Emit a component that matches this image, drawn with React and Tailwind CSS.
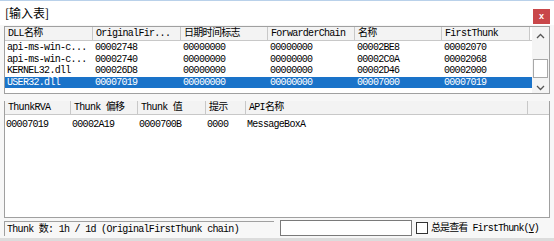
import React from 'react';

const upperCols = [
  { label: 'DLL名称', w: 'w-[88px]' },
  { label: 'OriginalFir...', w: 'w-[88px]' },
  { label: '日期时间标志', w: 'w-[87px]' },
  { label: 'ForwarderChain', w: 'w-[87px]' },
  { label: '名称', w: 'w-[87px]' },
  { label: 'FirstThunk', w: 'w-[88px]' },
];

const upperRows = [
  ['api-ms-win-c...', '00002748', '00000000', '00000000', '00002BE8', '00002070'],
  ['api-ms-win-c...', '00002740', '00000000', '00000000', '00002C0A', '00002068'],
  ['KERNEL32.dll', '000026D8', '00000000', '00000000', '00002D46', '00002000'],
  ['USER32.dll', '00007019', '00000000', '00000000', '00007000', '00007019'],
];

const lowerCols = [
  { label: 'ThunkRVA', w: 'w-[66px]' },
  { label: 'Thunk 偏移', w: 'w-[67px]' },
  { label: 'Thunk 值', w: 'w-[68px]' },
  { label: '提示', w: 'w-[40px]' },
  { label: 'API名称', w: 'w-[282px]' },
];

const lowerRows = [['00007019', '00002A19', '0000700B', '0000', 'MessageBoxA']];

const mono = "font-['Liberation_Mono','Noto_Sans_CJK_SC',monospace] text-[10px] tracking-[-0.7px]";

const HeaderCell = ({ label, w }) => (
  <div className={`${w} shrink-0 h-[13px] leading-[13px] pl-[3px] bg-[#f3f3f3] border-r border-[#c8c8c8] truncate`}>
    {label}
  </div>
);

const Arrow = ({ up }) => (
  <svg width="9" height="6" viewBox="0 0 9 6">
    <path d={up ? 'M1 5 L4.5 1.5 L8 5' : 'M1 1 L4.5 4.5 L8 1'} fill="none" stroke="#555" strokeWidth="1.3" />
  </svg>
);

export default function App() {
  return (
    <div className="w-[554px] h-[241px] bg-[#f7f7f7] border-t border-[#b9d1ea] flex flex-col relative overflow-hidden">
      {/* title */}
      <div className="h-[24px] flex items-center justify-between pl-[5px] pr-[4px] bg-white">
        <span className="font-['Noto_Sans_CJK_SC',sans-serif] text-[12px] text-black leading-none">[输入表]</span>
        <div className="w-[17px] h-[15px] bg-[#c9474a] flex items-center justify-center mt-[7px]">
          <span className="text-white text-[9px] font-bold font-['Liberation_Sans',sans-serif] leading-none">x</span>
        </div>
      </div>

      {/* upper list */}
      <div className={`mx-[4px] mt-[1px] h-[68px] border border-[#a0a0a0] bg-white flex ${mono}`}>
        <div className="flex-1 flex flex-col">
          <div className="flex border-b border-[#c8c8c8]">
            {upperCols.map((c) => (
              <HeaderCell key={c.label} {...c} />
            ))}
          </div>
          <div className="pt-[1px]">
            {upperRows.map((r, i) => (
              <div
                key={i}
                className={`flex h-[11.5px] leading-[11.5px] ${i === 3 ? 'bg-[#1a73c9] text-white' : 'text-black'}`}
              >
                {r.map((v, j) => (
                  <div key={j} className={`${upperCols[j].w} shrink-0 pl-[2px] truncate`}>
                    {v}
                  </div>
                ))}
              </div>
            ))}
          </div>
        </div>
        <div className="w-[17px] bg-[#f4f4f4] flex flex-col items-center">
          <div className="h-[17px] flex items-center justify-center">
            <Arrow up />
          </div>
          <div className="flex-1 w-full flex flex-col justify-end pb-[4px] items-center">
            <div className="w-[15px] h-[19px] bg-white border border-[#a8a8a8]" />
          </div>
          <div className="h-[11px] flex items-center justify-center">
            <Arrow />
          </div>
        </div>
      </div>

      {/* lower list */}
      <div className={`mx-[4px] mt-[7px] h-[117px] border border-[#a0a0a0] bg-white flex flex-col ${mono}`}>
        <div className="flex border-b border-[#c8c8c8] mt-[-1px]">
          {lowerCols.map((c) => (
            <HeaderCell key={c.label} {...c} />
          ))}
          <div className="flex-1 h-[13px] bg-[#f3f3f3]" />
        </div>
        <div className="pt-[4px]">
          {lowerRows.map((r, i) => (
            <div key={i} className="flex h-[12px] leading-[12px] text-black">
              {r.map((v, j) => (
                <div key={j} className={`${lowerCols[j].w} shrink-0 pl-[1px] truncate`}>
                  {v}
                </div>
              ))}
            </div>
          ))}
        </div>
      </div>

      {/* status bar */}
      <div className={`flex items-center h-[18px] mt-[1px] pl-[4px] pr-[4px] gap-[4px] ${mono}`}>
        <div className="w-[270px] h-[15px] leading-[15px] border-t border-l border-[#a0a0a0] pl-[2px] text-black bg-[#f7f7f7]">
          Thunk 数: 1h / 1d (OriginalFirstThunk chain)
        </div>
        <div className="w-[132px] h-[16px] border border-[#7a7a7a] bg-white ml-[2px]" />
        <div className="flex items-center gap-[3px]">
          <div className="w-[12px] h-[12px] border border-[#333] bg-white" />
          <span className="text-black whitespace-nowrap tracking-[-0.9px]">
            总是查看 FirstThunk(<span className="underline">V</span>)
          </span>
        </div>
      </div>
      <div className="flex-1 border-b-[3px] border-[#dcdcdc]" />
    </div>
  );
}
